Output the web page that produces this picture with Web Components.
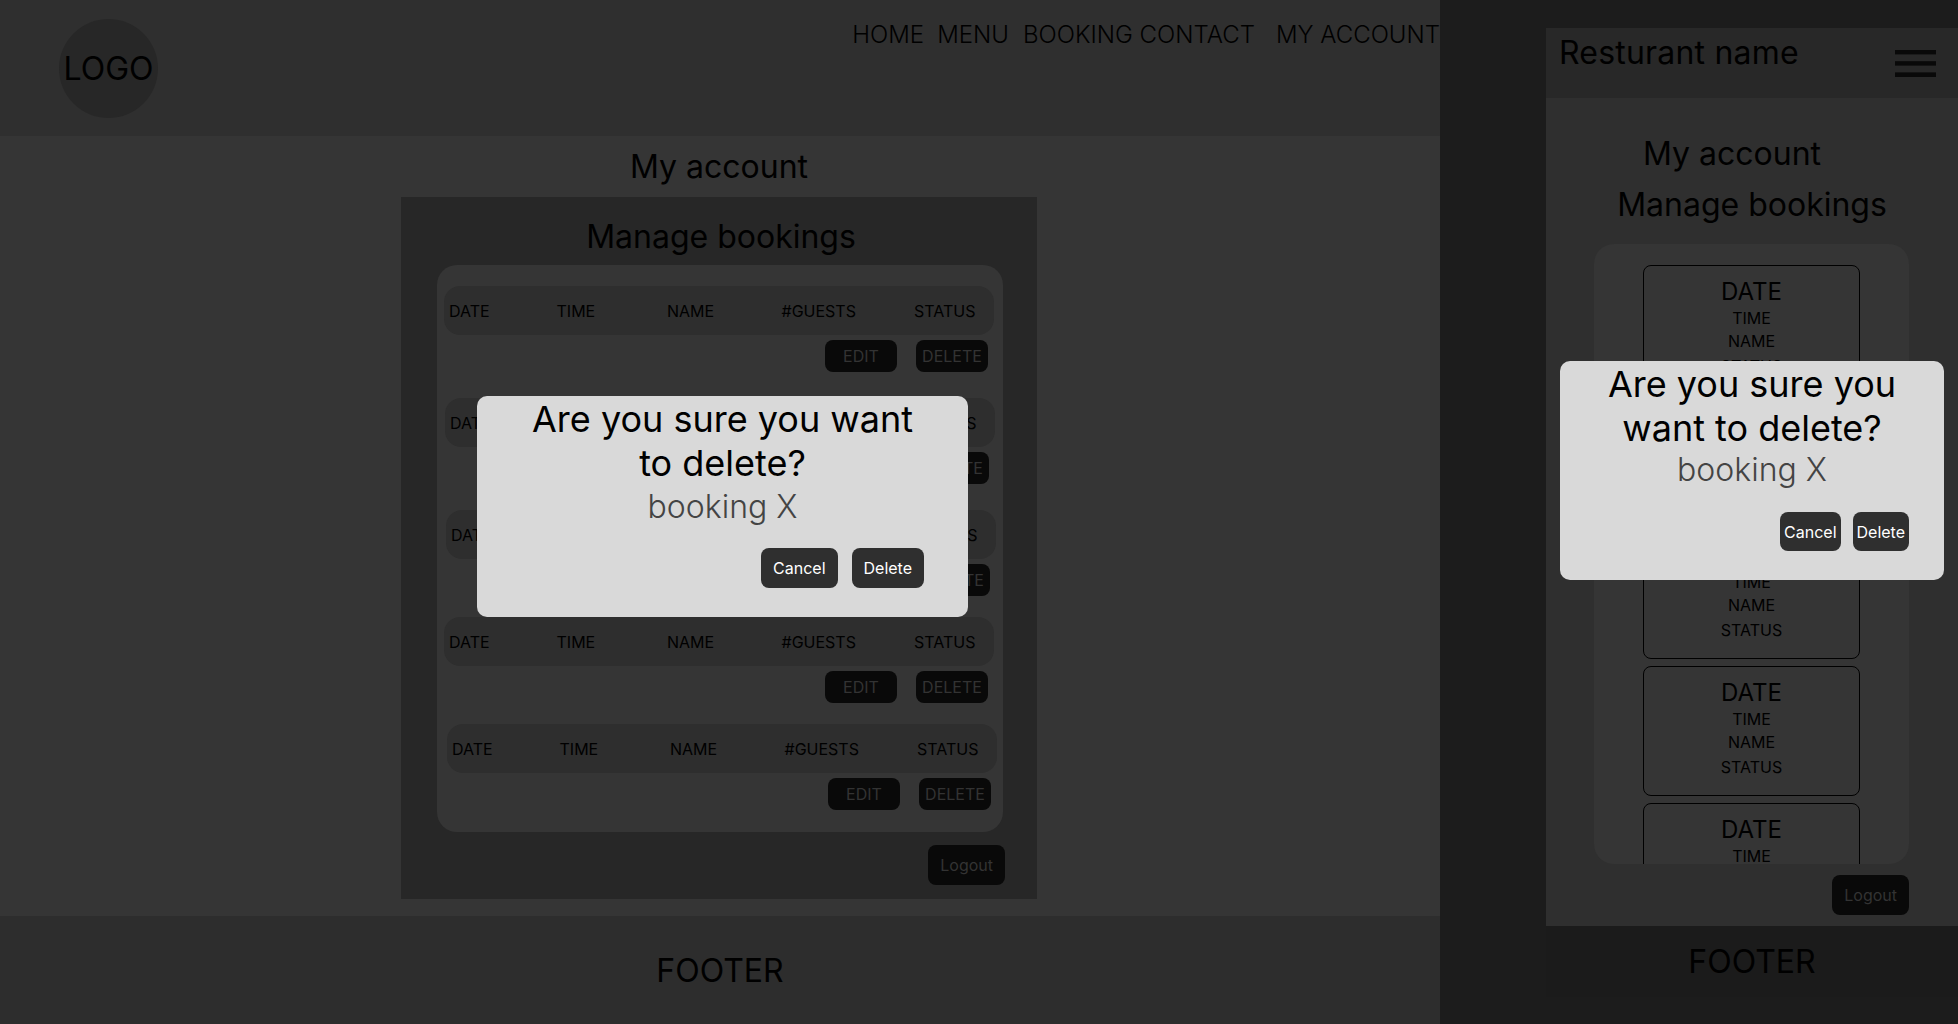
<!DOCTYPE html>
<html lang="en">
<head>
<meta charset="utf-8">
<title>My account</title>
<style>
  html, body { margin: 0; height: 100%; background: #1c1c1c; }
  body { font-family: Inter, "Liberation Sans", sans-serif; font-weight: 400; color: #000; overflow: hidden; }
</style>
</head>
<body>
<app-page></app-page>
<script>
const base = `
  * { box-sizing: border-box; }
  h1, h2, p { margin: 0; font-weight: 400; }
`;

// small dark button, colours and size come in through custom properties
class UiButton extends HTMLElement {
  constructor() {
    super();
    this._shadowRoot = this.attachShadow({ mode: "open" });
  }
  connectedCallback() {
    this._shadowRoot.innerHTML = `
      <style>
        ${base}
        :host { display: block; }
        button {
          display: block;
          width: var(--btn-w, auto);
          height: var(--btn-h, 40px);
          padding: var(--btn-pad, 0 12px);
          border: 0;
          border-radius: 8px;
          background: var(--btn-bg, #090909);
          color: var(--btn-fg, #333);
          font: 400 16px Inter, "Liberation Sans", sans-serif;
          white-space: nowrap;
        }
      </style>
      <button><slot></slot></button>
    `;
  }
}
customElements.define("ui-button", UiButton);

class SiteHeader extends HTMLElement {
  constructor() {
    super();
    this._shadowRoot = this.attachShadow({ mode: "open" });
  }
  connectedCallback() {
    this._shadowRoot.innerHTML = `
      <style>
        ${base}
        :host { display: flex; justify-content: space-between; height: 136px; background: #2f2f2f; }
        .logo {
          width: 99px; height: 99px; margin: 19px 0 0 59px;
          border-radius: 50%; background: #272727;
          display: flex; align-items: center; justify-content: center;
          font-size: 32px;
        }
        nav { display: flex; padding-top: 20px; font-size: 24px; font-weight: 300; line-height: 29px; white-space: nowrap; }
        nav a:nth-child(2) { margin-left: 13px; }
        nav a:nth-child(3) { margin-left: 14px; }
        nav a:nth-child(5) { margin-left: 21px; }
      </style>
      <div class="logo">LOGO</div>
      <nav>
        <a>HOME</a>
        <a>MENU</a>
        <a>BOOKING&nbsp;</a>
        <a>CONTACT</a>
        <a>MY ACCOUNT</a>
      </nav>
    `;
  }
}
customElements.define("site-header", SiteHeader);

class BookingRow extends HTMLElement {
  constructor() {
    super();
    this._shadowRoot = this.attachShadow({ mode: "open" });
  }
  connectedCallback() {
    this._shadowRoot.innerHTML = `
      <style>
        ${base}
        :host { display: block; width: 550px; }
        .info {
          display: grid;
          grid-template-columns: 107.5px 110.5px 114.5px 132.5px 1fr;
          align-items: center;
          height: 49px;
          padding-left: 5px;
          border-radius: 16px;
          background: #2e2e2e;
          font-size: 16px;
        }
        .actions {
          display: flex; justify-content: flex-end; gap: 19px;
          margin-top: 5px; padding-right: 6px;
          --btn-w: 72px; --btn-h: 32px; --btn-pad: 0;
        }
      </style>
      <div class="info">
        <span>DATE</span><span>TIME</span><span>NAME</span><span>#GUESTS</span><span>STATUS</span>
      </div>
      <div class="actions">
        <ui-button>EDIT</ui-button>
        <ui-button>DELETE</ui-button>
      </div>
    `;
  }
}
customElements.define("booking-row", BookingRow);

class BookingCard extends HTMLElement {
  constructor() {
    super();
    this._shadowRoot = this.attachShadow({ mode: "open" });
  }
  connectedCallback() {
    this._shadowRoot.innerHTML = `
      <style>
        ${base}
        :host {
          display: block; flex: none; width: 217px; height: 130px;
          padding-top: 11px;
          border: 1px solid #000; border-radius: 8px;
          box-sizing: border-box;
          text-align: center; font-size: 16px;
        }
        :host([short]) { height: 120px; }
        .date { font-size: 24px; margin-bottom: 2px; }
        .name { margin-top: 3px; }
        .status { margin-top: 4.5px; }
      </style>
      <div class="date">DATE</div>
      <div>TIME</div>
      <div class="name">NAME</div>
      <div class="status">STATUS</div>
    `;
  }
}
customElements.define("booking-card", BookingCard);

class ConfirmModal extends HTMLElement {
  constructor() {
    super();
    this._shadowRoot = this.attachShadow({ mode: "open" });
  }
  connectedCallback() {
    this._shadowRoot.innerHTML = `
      <style>
        ${base}
        :host {
          display: block; position: absolute;
          padding-top: 1px;
          border-radius: 10px;
          background: #d9d9d9;
          text-align: center;
          --btn-bg: #2f2f2f;
          --btn-fg: #fff;
        }
        h2 { font-size: 36px; padding: 0 var(--modal-inset, 50px); color: #000; }
        p { font-size: 32px; font-weight: 300; color: #444; margin-top: var(--modal-sub, 2px); }
        .actions { display: flex; justify-content: flex-end; margin-top: var(--modal-top, 22px); padding-right: var(--modal-right, 44px); gap: var(--modal-gap, 14px); }
      </style>
      <h2>Are you sure you want to delete?</h2>
      <p>booking X</p>
      <div class="actions">
        <ui-button>Cancel</ui-button>
        <ui-button>Delete</ui-button>
      </div>
    `;
  }
}
customElements.define("confirm-modal", ConfirmModal);

class DesktopView extends HTMLElement {
  constructor() {
    super();
    this._shadowRoot = this.attachShadow({ mode: "open" });
  }
  connectedCallback() {
    this._shadowRoot.innerHTML = `
      <style>
        ${base}
        :host { display: flex; flex-direction: column; position: relative; flex: none; width: 1440px; height: 1024px; background: #353535; }
        main { flex: 1; display: flex; flex-direction: column; align-items: center; padding: 11px 2px 0 0; }
        h1 { font-size: 32px; }
        .panel {
          width: 636px; height: 702px; margin-top: 11px;
          padding: 20px 32px 0 36px;
          background: #272727;
          display: flex; flex-direction: column;
        }
        .panel h1 { text-align: center; }
        .list {
          width: 566px; height: 567px; margin-top: 9px; padding-top: 21px;
          border-radius: 20px; background: #353535;
        }
        .logout { align-self: flex-end; margin-top: 13px; }
        footer {
          height: 108px; background: #2d2d2d;
          display: flex; align-items: center; justify-content: center;
          font-size: 32px;
        }
        confirm-modal { left: 477px; top: 396px; width: 491px; height: 221px; }
      </style>
      <site-header></site-header>
      <main>
        <h1>My account</h1>
        <section class="panel">
          <h1>Manage bookings</h1>
          <div class="list">
            <booking-row style="margin-left:7px"></booking-row>
            <booking-row style="margin:26px 0 0 8px"></booking-row>
            <booking-row style="margin:26px 0 0 9px"></booking-row>
            <booking-row style="margin:21px 0 0 7px"></booking-row>
            <booking-row style="margin:21px 0 0 10px"></booking-row>
          </div>
          <ui-button class="logout">Logout</ui-button>
        </section>
      </main>
      <footer>FOOTER</footer>
      <confirm-modal></confirm-modal>
    `;
  }
}
customElements.define("desktop-view", DesktopView);

class MobileView extends HTMLElement {
  constructor() {
    super();
    this._shadowRoot = this.attachShadow({ mode: "open" });
  }
  connectedCallback() {
    this._shadowRoot.innerHTML = `
      <style>
        ${base}
        :host { display: block; box-sizing: border-box; position: relative; flex: none; width: 518px; height: 1024px; padding: 28px 0 0 106px; background: #1c1c1c; }
        .frame { width: 412px; height: 969px; display: flex; flex-direction: column; }
        header {
          flex: none; height: 70px; padding: 5px 22px 0 13px;
          display: flex; justify-content: space-between; align-items: flex-start;
          background: #282828;
        }
        header h1 { letter-spacing: 0.2px; }
        header svg { display: block; margin-top: 17px; }
        h1 { font-size: 32px; }
        main { flex: 1; display: flex; flex-direction: column; padding-top: 36px; background: #2f2f2f; }
        .account { margin-left: 97px; }
        .manage { margin-top: 12px; text-align: center; }
        .list {
          width: 315px; height: 620px; margin: 20px 0 0 48px; padding-top: 21px;
          border-radius: 20px; background: #353535; overflow: hidden;
          display: flex; flex-direction: column; align-items: center; gap: 7px;
        }
        .logout { align-self: flex-end; margin: 11px 49px 0 0; }
        footer {
          flex: none; height: 71px; background: #1b1b1b;
          display: flex; align-items: center; justify-content: center;
          font-size: 32px;
        }
        confirm-modal {
          left: 120px; top: 361px; width: 384px; height: 219px;
          --modal-inset: 30px; --modal-sub: 0; --modal-top: 23px; --modal-right: 35px; --modal-gap: 12px;
          --btn-h: 39px; --btn-pad: 0 4px;
        }
      </style>
      <div class="frame">
        <header>
          <h1>Resturant name</h1>
          <svg width="41" height="27" viewBox="0 0 41 27" fill="#090909">
            <rect y="0" width="41" height="4.4"/>
            <rect y="11.2" width="41" height="4.4"/>
            <rect y="22.4" width="41" height="4.6"/>
          </svg>
        </header>
        <main>
          <h1 class="account">My account</h1>
          <h1 class="manage">Manage bookings</h1>
          <div class="list">
            <booking-card short></booking-card>
            <booking-card></booking-card>
            <booking-card></booking-card>
            <booking-card></booking-card>
            <booking-card></booking-card>
          </div>
          <ui-button class="logout">Logout</ui-button>
        </main>
        <footer>FOOTER</footer>
      </div>
      <confirm-modal></confirm-modal>
    `;
  }
}
customElements.define("mobile-view", MobileView);

class AppPage extends HTMLElement {
  constructor() {
    super();
    this._shadowRoot = this.attachShadow({ mode: "open" });
  }
  connectedCallback() {
    this._shadowRoot.innerHTML = `
      <style>
        :host { display: flex; width: 1958px; height: 1024px; }
      </style>
      <desktop-view></desktop-view>
      <mobile-view></mobile-view>
    `;
  }
}
customElements.define("app-page", AppPage);
</script>
</body>
</html>
